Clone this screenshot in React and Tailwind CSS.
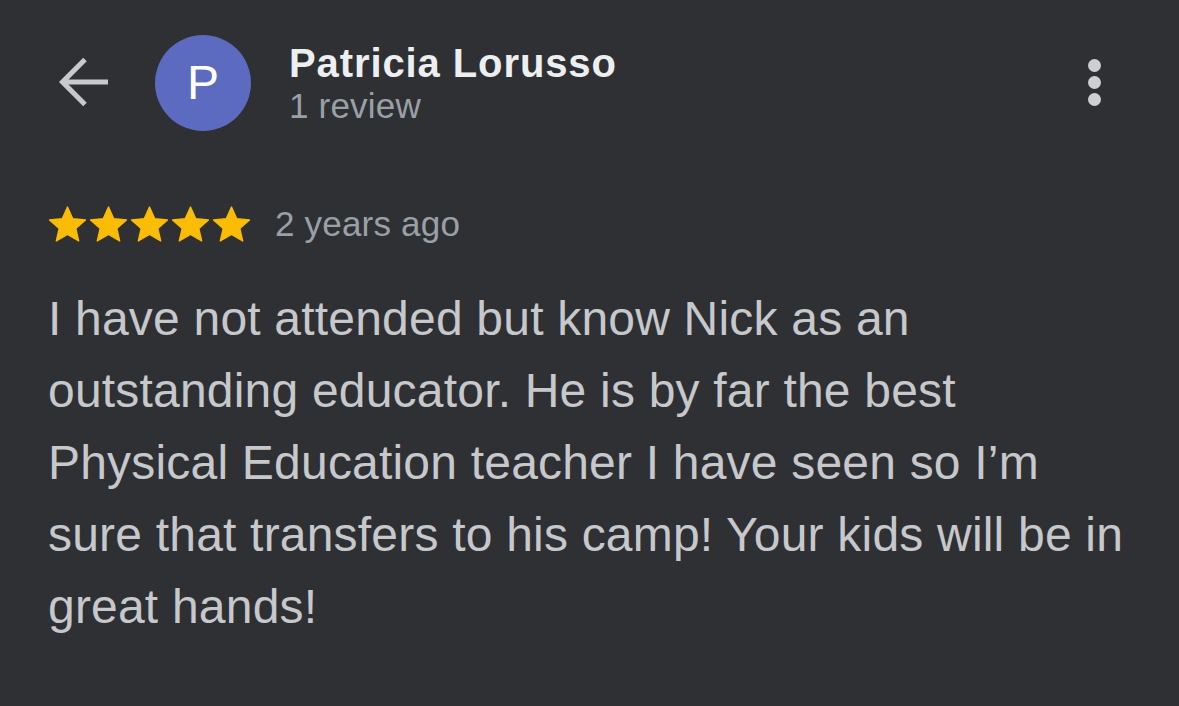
import React from 'react';

function Star() {
  return (
    <svg width="41" height="39" viewBox="0 0 24 23">
      <path
        d="M12 1.2l3.1 6.9 7.5.7-5.7 5 1.7 7.4L12 17.3l-6.6 3.9 1.7-7.4-5.7-5 7.5-.7z"
        fill="#fbbc04"
        stroke="#fbbc04"
        strokeWidth="0.8"
        strokeLinejoin="round"
      />
    </svg>
  );
}

export default function App() {
  return (
    <div
      className="w-[1179px] h-[706px] bg-[#2f3034] overflow-hidden"
      style={{ fontFamily: '"Liberation Sans", Arial, sans-serif' }}
    >
      {/* Header */}
      <div className="flex items-center h-[96px] mt-[35px] pl-[58px] pr-[78px]">
        <svg width="52" height="52" viewBox="0 0 52 52" className="shrink-0">
          <path
            d="M50 25H5M27 2.5L4.5 25 27 47.5"
            fill="none"
            stroke="#c8c9cc"
            strokeWidth="5"
          />
        </svg>
        <div className="ml-[45px] w-[96px] h-[96px] rounded-full bg-[#5c6bc0] flex items-center justify-center text-white text-[48px] shrink-0">
          P
        </div>
        <div className="ml-[38px] flex flex-col -mt-[2px]">
          <div className="text-[#eceef0] text-[40px] font-bold leading-[46px] tracking-[0.9px]">Patricia Lorusso</div>
          <div className="text-[#9aa0a6] text-[35px] leading-[38px] tracking-[0.2px] mt-[1px]">1 review</div>
        </div>
        <div className="ml-auto flex flex-col gap-[4px] items-center -mt-[2px]">
          <span className="w-[13px] h-[13px] rounded-full bg-[#cdcfd2]" />
          <span className="w-[13px] h-[13px] rounded-full bg-[#cdcfd2]" />
          <span className="w-[13px] h-[13px] rounded-full bg-[#cdcfd2]" />
        </div>
      </div>

      {/* Rating */}
      <div className="flex items-center mt-[73px] pl-[47px]">
        <div className="flex">
          <Star />
          <Star />
          <Star />
          <Star />
          <Star />
        </div>
        <span className="ml-[23px] text-[#9aa0a6] text-[35px] leading-[40px] tracking-[0.2px]">2 years ago</span>
      </div>

      {/* Review text */}
      <p className="mt-[39px] pl-[48px] pr-[20px] text-[#c6c8cb] text-[48px] leading-[72px] tracking-[0.2px] whitespace-nowrap">
        I have not attended but know Nick as an
        <br />
        outstanding educator. He is by far the best
        <br />
        Physical Education teacher I have seen so I’m
        <br />
        sure that transfers to his camp! Your kids will be in
        <br />
        great hands!
      </p>
    </div>
  );
}
